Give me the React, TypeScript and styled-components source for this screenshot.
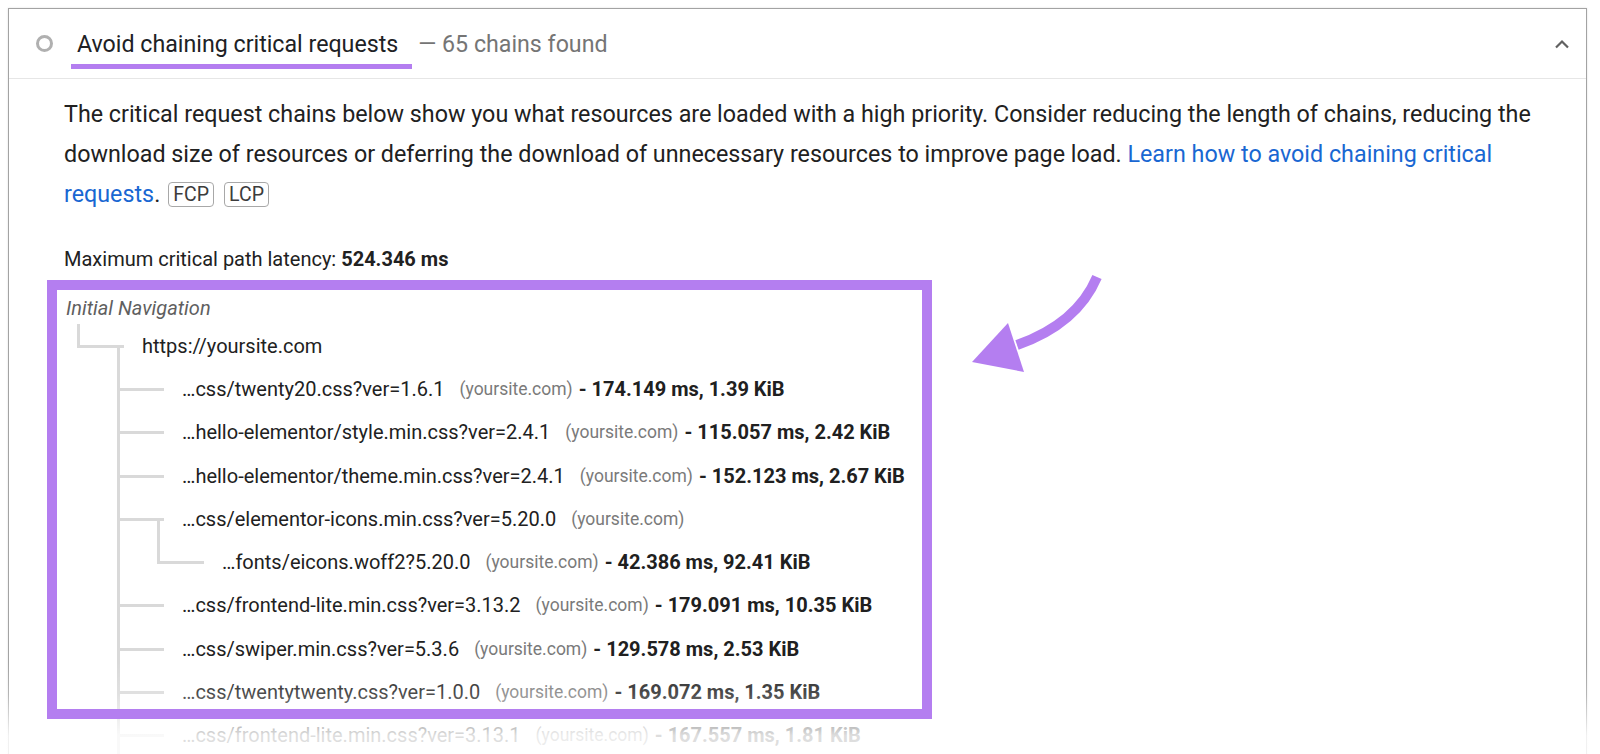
import React from 'react'
import styled, { createGlobalStyle } from 'styled-components'

const GlobalStyle = createGlobalStyle`
  html, body {
    margin: 0;
    padding: 0;
    background: #ffffff;
    overflow: hidden;
  }
  body {
    font-family: 'Roboto', 'Liberation Sans', sans-serif;
    color: #212121;
  }
`

const PURPLE = '#b47ef0'

const Page = styled.div`
  position: relative;
  width: 1600px;
  height: 754px;
  padding: 8px 13px 0 8px;
  box-sizing: border-box;
  overflow: hidden;
`

const Card = styled.section`
  border: 1px solid #a3a3a3;
  border-bottom: none;
  min-height: 800px;
  box-shadow: 0 0 2px rgba(0, 0, 0, 0.12);
`

const Header = styled.header`
  height: 69px;
  display: flex;
  align-items: center;
  padding: 0 16px 0 27px;
  border-bottom: 1px solid #e6e6e6;
`

const StatusCircle = styled.span`
  width: 11px;
  height: 11px;
  border: 3px solid #b0b0b0;
  border-radius: 50%;
  flex: none;
`

const Title = styled.span`
  position: relative;
  margin-left: 24px;
  font-size: 23.2px;
  line-height: 28px;
  color: #202124;

  &::after {
    content: '';
    position: absolute;
    left: -6px;
    right: -14px;
    top: calc(100% + 6px);
    height: 5px;
    background: ${PURPLE};
  }
`

const Found = styled.span`
  margin-left: 20px;
  font-size: 23.2px;
  line-height: 28px;
  color: #757575;
`

const Chevron = styled.svg`
  margin-left: auto;
  width: 16px;
  height: 10px;
  flex: none;
`

const Body = styled.div`
  padding: 15px 40px 0 55px;
`

const Description = styled.p`
  margin: 0;
  font-size: 23.3px;
  line-height: 40px;
  color: #212121;
`

const Link = styled.a`
  color: #1967d2;
  text-decoration: none;
`

const Badge = styled.span`
  display: inline-block;
  margin-left: 8px;
  padding: 0 4px;
  border: 1px solid #a8a8a8;
  border-radius: 4px;
  font-size: 19.5px;
  line-height: 23px;
  color: #3c3c3c;
  vertical-align: 1px;

  & + & {
    margin-left: 10px;
  }
`

const Latency = styled.div`
  margin-top: 33px;
  font-size: 20px;
  line-height: 24px;

  b {
    font-weight: 700;
  }
`

const Tree = styled.div`
  position: relative;
  margin-top: 20px;
`

const Highlight = styled.div`
  position: absolute;
  left: -17px;
  top: -11px;
  width: 885px;
  height: 439px;
  border: 10px solid ${PURPLE};
  box-sizing: border-box;
  z-index: 3;
  pointer-events: none;
`

const RootLabel = styled.div`
  height: 33px;
  display: flex;
  align-items: center;
  padding-left: 2px;
  font-size: 20px;
  font-style: italic;
  color: #5f5f5f;
`

const Row = styled.div`
  height: 43.3px;
  display: flex;
  align-items: center;
  white-space: nowrap;
`

type MarkerKind = 'space' | 'vert' | 'up-right' | 'vert-right' | 'horiz' | 'horiz-down'

const LINE = '#d9d9d9'

const Marker = styled.span<{ $kind: MarkerKind }>`
  position: relative;
  flex: none;
  width: 40px;
  height: 100%;

  &::before {
    content: '';
    position: absolute;
    left: 13px;
    width: 3px;
    background: ${LINE};
    display: ${(p) => (p.$kind === 'space' || p.$kind === 'horiz' ? 'none' : 'block')};
    top: ${(p) => (p.$kind === 'horiz-down' ? 'calc(50% - 1px)' : '0')};
    bottom: ${(p) => (p.$kind === 'up-right' ? 'calc(50% - 2px)' : '0')};
  }

  &::after {
    content: '';
    position: absolute;
    top: calc(50% - 1px);
    height: 3px;
    background: ${LINE};
    display: ${(p) => (p.$kind === 'space' || p.$kind === 'vert' ? 'none' : 'block')};
    left: ${(p) => (p.$kind === 'up-right' || p.$kind === 'vert-right' ? '13px' : '0')};
    right: ${(p) => (p.$kind === 'up-right' || p.$kind === 'vert-right' ? '0' : '20px')};
  }
`

const Url = styled.span`
  margin-left: -2px;
  font-size: 20px;
  color: #212121;
`

const Domain = styled.span`
  margin-left: 15px;
  font-size: 17.5px;
  color: #7a7a7a;
`

const Stats = styled.span`
  margin-left: 6px;
  font-size: 20px;
  font-weight: 700;
  color: #202020;
`

const Fade = styled.div`
  position: absolute;
  left: 0;
  right: 0;
  bottom: 0;
  height: 92px;
  background: linear-gradient(
    rgba(255, 255, 255, 0) 0%,
    rgba(255, 255, 255, 0.2) 35%,
    rgba(255, 255, 255, 0.85) 80%
  );
  z-index: 2;
  pointer-events: none;
`

const Arrow = styled.svg`
  position: absolute;
  left: 960px;
  top: 265px;
  width: 150px;
  height: 120px;
  z-index: 4;
`

interface ChainNode {
  markers: MarkerKind[]
  url: string
  domain?: string
  stats?: string
}

const nodes: ChainNode[] = [
  { markers: ['up-right', 'horiz-down'], url: 'https://yoursite.com' },
  {
    markers: ['space', 'vert-right', 'horiz'],
    url: '…css/twenty20.css?ver=1.6.1',
    domain: '(yoursite.com)',
    stats: '- 174.149 ms, 1.39 KiB',
  },
  {
    markers: ['space', 'vert-right', 'horiz'],
    url: '…hello-elementor/style.min.css?ver=2.4.1',
    domain: '(yoursite.com)',
    stats: '- 115.057 ms, 2.42 KiB',
  },
  {
    markers: ['space', 'vert-right', 'horiz'],
    url: '…hello-elementor/theme.min.css?ver=2.4.1',
    domain: '(yoursite.com)',
    stats: '- 152.123 ms, 2.67 KiB',
  },
  {
    markers: ['space', 'vert-right', 'horiz-down'],
    url: '…css/elementor-icons.min.css?ver=5.20.0',
    domain: '(yoursite.com)',
  },
  {
    markers: ['space', 'vert', 'up-right', 'horiz'],
    url: '…fonts/eicons.woff2?5.20.0',
    domain: '(yoursite.com)',
    stats: '- 42.386 ms, 92.41 KiB',
  },
  {
    markers: ['space', 'vert-right', 'horiz'],
    url: '…css/frontend-lite.min.css?ver=3.13.2',
    domain: '(yoursite.com)',
    stats: '- 179.091 ms, 10.35 KiB',
  },
  {
    markers: ['space', 'vert-right', 'horiz'],
    url: '…css/swiper.min.css?ver=5.3.6',
    domain: '(yoursite.com)',
    stats: '- 129.578 ms, 2.53 KiB',
  },
  {
    markers: ['space', 'vert-right', 'horiz'],
    url: '…css/twentytwenty.css?ver=1.0.0',
    domain: '(yoursite.com)',
    stats: '- 169.072 ms, 1.35 KiB',
  },
  {
    markers: ['space', 'vert-right', 'horiz'],
    url: '…css/frontend-lite.min.css?ver=3.13.1',
    domain: '(yoursite.com)',
    stats: '- 167.557 ms, 1.81 KiB',
  },
]

const App: React.FC = () => {
  return (
    <Page>
      <GlobalStyle />
      <Card>
        <Header>
          <StatusCircle />
          <Title>Avoid chaining critical requests</Title>
          <Found>— 65 chains found</Found>
          <Chevron viewBox="0 0 16 10">
            <path d="M2 8.5 L8 2.5 L14 8.5" fill="none" stroke="#616161" strokeWidth="2.2" />
          </Chevron>
        </Header>
        <Body>
          <Description>
            The critical request chains below show you what resources are loaded with a high
            priority. Consider reducing the length of chains, reducing the download size of
            resources or deferring the download of unnecessary resources to improve page load.{' '}
            <Link href="#">Learn how to avoid chaining critical requests</Link>.
            <Badge>FCP</Badge>
            <Badge>LCP</Badge>
          </Description>
          <Latency>
            Maximum critical path latency: <b>524.346 ms</b>
          </Latency>
          <Tree>
            <Highlight />
            <RootLabel>Initial Navigation</RootLabel>
            {nodes.map((node) => (
              <Row key={node.url}>
                {node.markers.map((kind, i) => (
                  <Marker key={i} $kind={kind} />
                ))}
                <Url>{node.url}</Url>
                {node.domain && <Domain>{node.domain}</Domain>}
                {node.stats && <Stats>{node.stats}</Stats>}
              </Row>
            ))}
          </Tree>
        </Body>
      </Card>
      <Fade />
      <Arrow viewBox="960 265 150 120">
        <path d="M1097 277 Q1077 324 1017 345" fill="none" stroke={PURPLE} strokeWidth="10" />
        <polygon points="1008,323 972,362 1024,372" fill={PURPLE} />
      </Arrow>
    </Page>
  )
}

export default App
